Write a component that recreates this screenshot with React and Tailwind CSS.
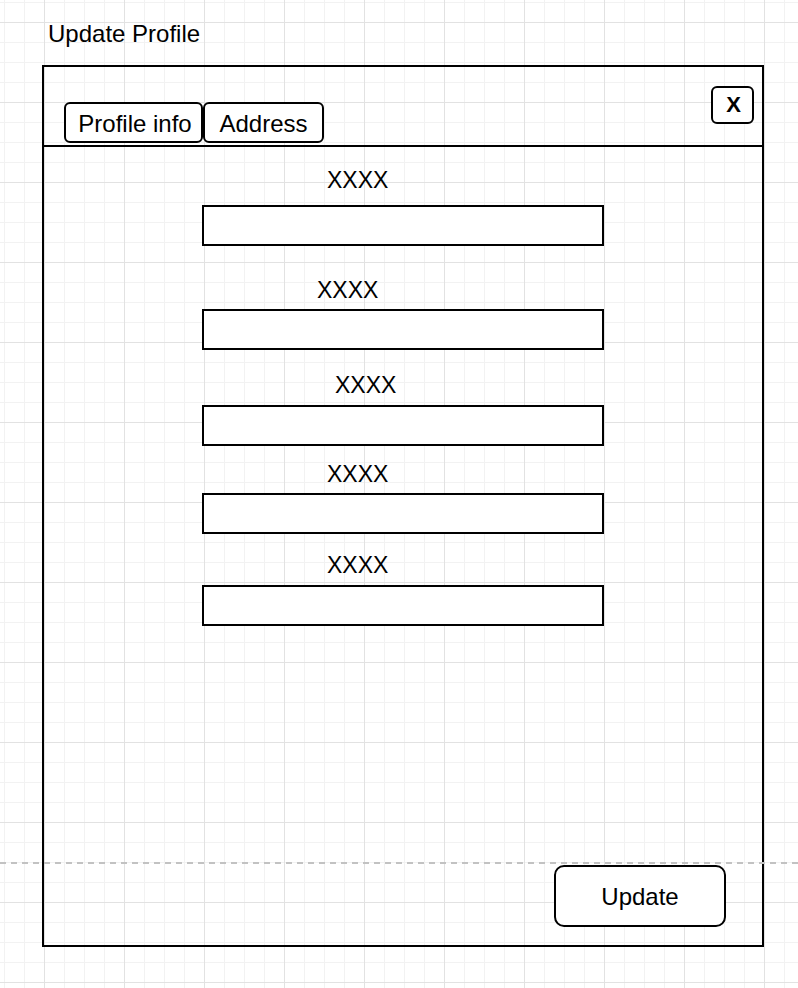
import React from "react";

const fields = [
  { labelCls: "mt-[20px] ml-[283px]", inputCls: "mt-[12px]" },
  { labelCls: "mt-[31px] ml-[273px]", inputCls: "mt-[6px]" },
  { labelCls: "mt-[22px] ml-[291px]", inputCls: "mt-[7px]" },
  { labelCls: "mt-[15px] ml-[283px]", inputCls: "mt-[6px]" },
  { labelCls: "mt-[18px] ml-[283px]", inputCls: "mt-[7px]" },
];

export default function App() {
  return (
    <div className="relative w-full h-[988px] overflow-hidden bg-white font-['Liberation_Sans',Arial,sans-serif] text-black bg-[image:linear-gradient(to_right,#e2e2e2_1px,transparent_1px),linear-gradient(to_bottom,#e2e2e2_1px,transparent_1px),linear-gradient(to_right,#f2f2f2_1px,transparent_1px),linear-gradient(to_bottom,#f2f2f2_1px,transparent_1px)] bg-[size:80px_80px,80px_80px,20px_20px,20px_20px] bg-[position:44px_22px,44px_22px,4px_2px,4px_2px]">
      <div className="pt-[20px] pl-[48px] text-[24px] leading-[27px]">Update Profile</div>

      <div className="mt-[18px] ml-[42px] w-[722px] h-[882px] border-2 border-black flex flex-col">
        <div className="h-[80px] border-b-2 border-black flex justify-between items-start pl-[20px] pr-[8px]">
          <div className="mt-[35px] flex">
            <div className="w-[139px] h-[41px] border-2 border-black rounded-[6px] bg-white flex items-center justify-center pt-[2px] pl-[3px] text-[24px] leading-[26px]">
              Profile info
            </div>
            <div className="w-[121px] h-[41px] border-2 border-black rounded-[6px] bg-white flex items-center justify-center pt-[2px] text-[24px] leading-[26px]">
              Address
            </div>
          </div>
          <div className="mt-[19px] w-[43px] h-[38px] border-2 border-black rounded-[6px] bg-white flex items-center justify-center pl-[2px] text-[22px] leading-[26px] font-bold">
            X
          </div>
        </div>

        <div className="flex flex-col flex-1">
          {fields.map((f, i) => (
            <React.Fragment key={i}>
              <div className={`${f.labelCls} text-[23px] leading-[26px]`}>XXXX</div>
              <div className={`${f.inputCls} ml-[158px] w-[402px] h-[41px] border-2 border-black bg-white`} />
            </React.Fragment>
          ))}
          <div className="flex-1" />
          <div className="flex justify-end pr-[36px] pb-[18px]">
            <div className="w-[172px] h-[62px] border-2 border-black rounded-[10px] bg-white flex items-center justify-center pt-[2px] text-[24px] leading-[26px]">
              Update
            </div>
          </div>
        </div>
      </div>

      <div className="absolute left-0 right-0 top-[862px] h-[2px] bg-[image:repeating-linear-gradient(to_right,#c2c2c2_0_6px,transparent_6px_11px)]" />
    </div>
  );
}
